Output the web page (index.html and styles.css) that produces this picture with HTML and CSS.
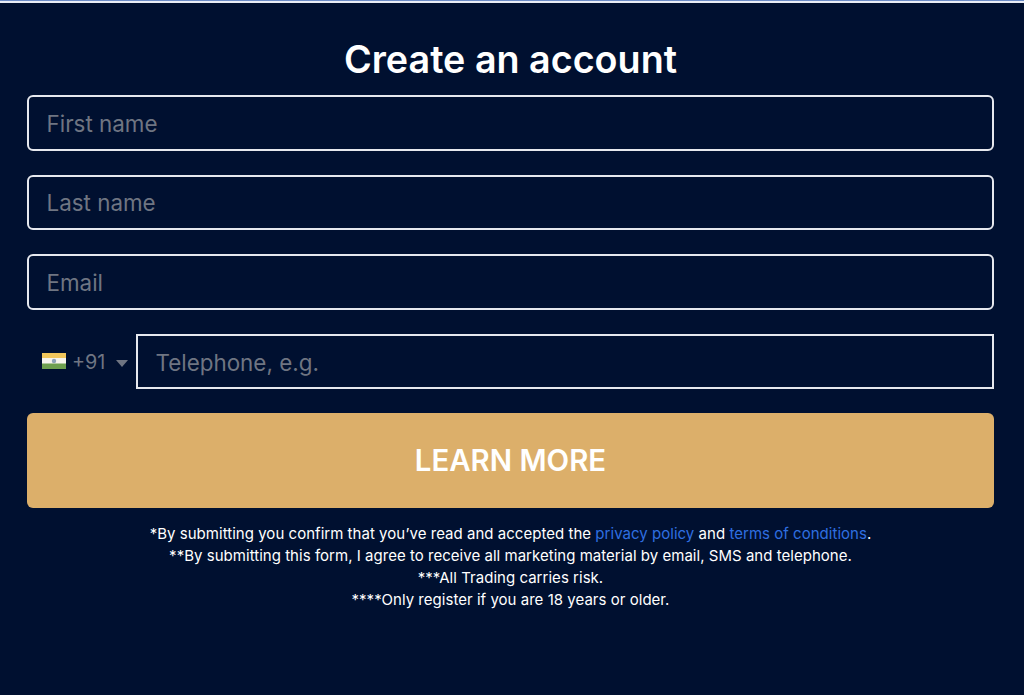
FILE: index.html
```html
<!DOCTYPE html>
<html lang="en">
<head>
	<meta charset="utf-8">
	<title>Create an account</title>
	<link rel="stylesheet" href="styles.css">
</head>
<body>
	<div class="topLine"></div>
	<form class="regBox">
		<h1 class="regTitle">Create an account</h1>
		<input class="boxInput" type="text" name="first_name" placeholder="First name">
		<input class="boxInput" type="text" name="last_name" placeholder="Last name">
		<input class="boxInput" type="email" name="email" placeholder="Email">
		<div class="phoneRow">
			<div class="dial">
				<svg class="flag" width="24" height="16" viewBox="0 0 24 16">
					<rect width="24" height="6" fill="#f2c75c"/>
					<rect y="5" width="24" height="6" fill="#f7f5ee"/>
					<rect y="10.500" width="24" height="5.500" fill="#6ea04f"/>
					<circle cx="12" cy="8" r="2.200" fill="#8fa3b8"/>
				</svg>
				<span class="dialCode">+91</span>
				<span class="caret"></span>
			</div>
			<input class="boxPhone" type="tel" name="phone" placeholder="Telephone, e.g.">
		</div>
		<button class="btnLearn" type="button">LEARN MORE</button>
		<div class="notes">
			<p>*By submitting you confirm that you’ve read and accepted the <a href="#">privacy policy</a> and <a href="#">terms of conditions</a>.</p>
			<p>**By submitting this form, I agree to receive all marketing material by email, SMS and telephone.</p>
			<p>***All Trading carries risk.</p>
			<p>****Only register if you are 18 years or older.</p>
		</div>
	</form>
</body>
</html>
```

FILE: styles.css
```css
*, *:after, *:before {
	box-sizing: border-box;
}
html, body {
	margin: 0;
	height: 100%;
	background: #001030;
	font-family: Inter, "Liberation Sans", sans-serif;
	color: #fff;
	overflow: hidden;
}
.topLine {
	height: 3px;
	background: #e9edf6;
	border-top: 1px solid #6d8cc6;
}
.regBox {
	display: flex;
	flex-direction: column;
	padding: 0 30px 0 27px;
}
.regTitle {
	margin: 33px 0 13px;
	font-size: 37.700px;
	line-height: 46px;
	font-weight: 600;
	text-align: center;
}
.boxInput, .boxPhone {
	height: 55.500px;
	padding: 1px 18px 0 17.500px;
	background: transparent;
	border: 2px solid #e6e8ee;
	color: #fff;
	outline: none;
	font-family: inherit;
	font-size: 22.4px;
}
.boxInput {
	width: 100%;
	margin-bottom: 24.170px;
	border-radius: 6px;
}
.boxInput::placeholder, .boxPhone::placeholder {
	color: #6f7582;
	opacity: 1;
}
.phoneRow {
	display: flex;
	margin-bottom: 24px;
}
.dial {
	width: 109px;
	flex: none;
	display: flex;
	align-items: center;
	padding-top: 1px;
	padding-left: 15px;
	color: #6f7582;
	font-size: 19.800px;
}
.flag {
	flex: none;
	margin-top: -2px;
}
.dialCode {
	margin-left: 6px;
}
.caret {
	margin-left: 11px;
	margin-top: 2px;
	border-left: 6px solid transparent;
	border-right: 6px solid transparent;
	border-top: 7px solid #6f7582;
}
.boxPhone {
	flex: 1;
	min-width: 0;
	border-radius: 0;
}
.btnLearn {
	height: 95px;
	background: #dcaf6a;
	border: none;
	border-radius: 6px;
	color: #fff;
	font-family: inherit;
	font-size: 29.400px;
	font-weight: 600;
	cursor: pointer;
}
.notes {
	margin-top: 15px;
	font-size: 15px;
	letter-spacing: 0.03px;
	line-height: 22px;
	text-align: center;
}
.notes p {
	margin: 0;
}
.notes a {
	color: #2f6fe0;
	text-decoration: none;
}
```
